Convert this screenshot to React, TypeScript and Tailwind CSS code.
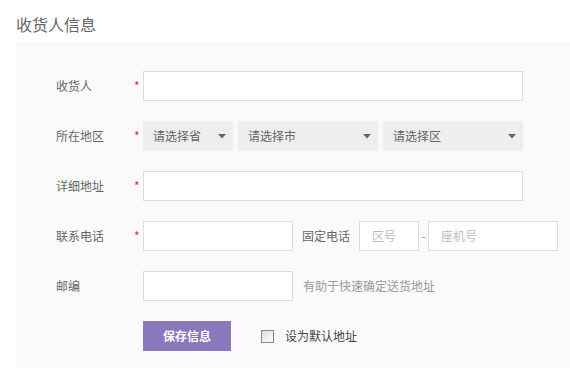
import React from "react";

const font = { fontFamily: '"Noto Sans CJK SC", "Microsoft YaHei", sans-serif' };

function Label({ text, req }: { text: string; req?: boolean }) {
  return (
    <>
      <div className="w-[78px] shrink-0 text-[12px] text-[#666]">{text}</div>
      <div className="w-[9px] shrink-0 text-[12px] text-[#d33] leading-none">{req ? "*" : ""}</div>
    </>
  );
}

function Select({ text, w }: { text: string; w: string }) {
  return (
    <div className={`${w} h-[30px] bg-[#eeeeee] flex items-center justify-between pl-[10px] pr-[7px] text-[12px] text-[#666]`}>
      <span>{text}</span>
      <svg width="8" height="5" viewBox="0 0 8 5"><path d="M0 0 L8 0 L4 4.5 Z" fill="#666" /></svg>
    </div>
  );
}

export default function App() {
  return (
    <div className="w-[570px] h-[368px] bg-white overflow-hidden" style={font}>
      <div className="pl-[16px] pt-[12px] h-[42px] text-[16px] text-[#666] leading-[24px]">收货人信息</div>
      <div className="ml-[16px] bg-[#fafafa] pt-[29px] pl-[40px] h-[340px] flex flex-col gap-[20px]">
        <div className="flex items-center h-[30px]">
          <Label text="收货人" req />
          <div className="w-[380px] h-[30px] bg-white border border-[#dddddd]" />
        </div>
        <div className="flex items-center h-[30px]">
          <Label text="所在地区" req />
          <div className="flex gap-[5px]">
            <Select text="请选择省" w="w-[90px]" />
            <Select text="请选择市" w="w-[140px]" />
            <Select text="请选择区" w="w-[140px]" />
          </div>
        </div>
        <div className="flex items-center h-[30px]">
          <Label text="详细地址" req />
          <div className="w-[380px] h-[30px] bg-white border border-[#dddddd]" />
        </div>
        <div className="flex items-center h-[30px]">
          <Label text="联系电话" req />
          <div className="w-[150px] h-[30px] bg-white border border-[#dddddd]" />
          <div className="ml-[9px] w-[57px] text-[12px] text-[#666]">固定电话</div>
          <div className="w-[60px] h-[30px] bg-white border border-[#dddddd] flex items-center pl-[12px] text-[12px] text-[#bbb]">区号</div>
          <div className="w-[9px] text-center text-[12px] text-[#999]">-</div>
          <div className="w-[130px] h-[30px] bg-white border border-[#dddddd] flex items-center pl-[12px] text-[12px] text-[#bbb]">座机号</div>
        </div>
        <div className="flex items-center h-[30px]">
          <Label text="邮编" />
          <div className="w-[150px] h-[30px] bg-white border border-[#dddddd]" />
          <div className="ml-[10px] text-[12px] text-[#999]">有助于快速确定送货地址</div>
        </div>
        <div className="flex items-center h-[30px]">
          <div className="w-[87px] shrink-0" />
          <div className="w-[88px] h-[30px] bg-[#8a78bc] text-white text-[12px] font-bold flex items-center justify-center">保存信息</div>
          <div className="ml-[30px] w-[13px] h-[13px] border border-[#888] bg-gradient-to-br from-[#dcdcdc] to-[#ffffff]" />
          <div className="ml-[11px] text-[12px] text-[#444]">设为默认地址</div>
        </div>
      </div>
    </div>
  );
}
